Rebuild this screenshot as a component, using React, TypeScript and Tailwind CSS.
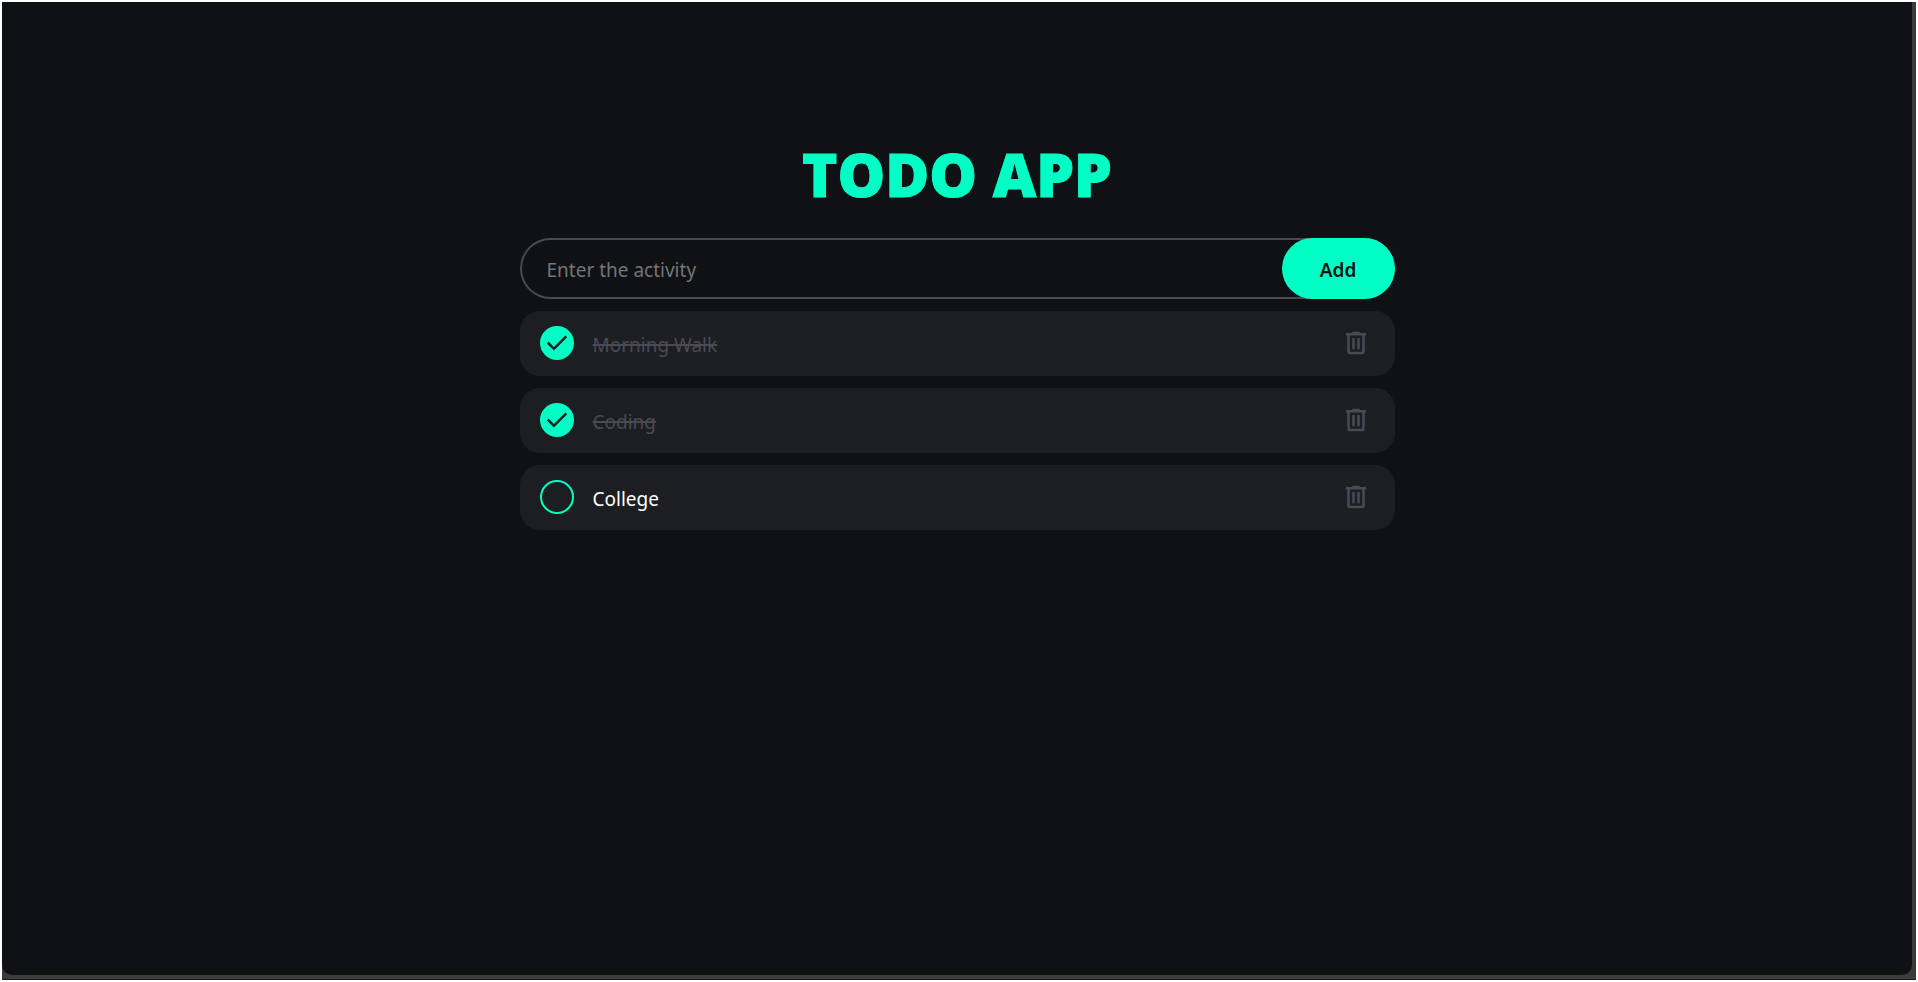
import { useState } from "react";

type Todo = { id: number; title: string; done: boolean };

const initialTodos: Todo[] = [
  { id: 1, title: "Morning Walk", done: true },
  { id: 2, title: "Coding", done: true },
  { id: 3, title: "College", done: false },
];

function CheckIcon() {
  return (
    <svg viewBox="0 -960 960 960" className="size-[30px] fill-[#1d1e21]" aria-hidden="true">
      <path d="M382-240 154-468l57-57 171 171 367-367 57 57-424 424Z" />
    </svg>
  );
}

function TrashIcon() {
  return (
    <svg viewBox="0 -960 960 960" className="size-[30px] fill-[#4a4a56]" aria-hidden="true">
      <path d="M280-120q-33 0-56.5-23.5T200-200v-520h-40v-80h200v-40h240v40h200v80h-40v520q0 33-23.5 56.5T680-120H280Zm400-600H280v520h400v-520ZM360-280h80v-360h-80v360Zm160 0h80v-360h-80v360Z" />
    </svg>
  );
}

export default function App() {
  const [todos, setTodos] = useState(initialTodos);
  const [text, setText] = useState("");

  const add = () => {
    const title = text.trim();
    if (!title) return;
    setTodos([...todos, { id: Date.now(), title, done: false }]);
    setText("");
  };

  return (
    <div className="flex min-h-screen flex-col bg-white p-[2px] font-['Noto_Sans',sans-serif]">
      <div className="flex grow flex-col border-b border-[#1d1d1d] bg-[#3c3c3c] pr-1 pb-1">
        <main className="grow rounded-b-[10px] bg-[#101115] px-4 pt-[136px]">
          <div className="mx-auto flex w-full max-w-[875px] flex-col">
            <h1 className="text-center font-['Open_Sans',sans-serif] text-[60px] leading-[72px] font-extrabold text-[#00ffc4] [-webkit-text-stroke:1px_#00ffc4]">
              TODO APP
            </h1>
            <form
              className="mt-7 flex h-[61px] rounded-full shadow-[inset_0_0_0_2px_#4a4a56]"
              onSubmit={(e) => {
                e.preventDefault();
                add();
              }}
            >
              <input
                type="text"
                aria-label="Activity"
                placeholder="Enter the activity"
                value={text}
                onChange={(e) => setText(e.target.value)}
                className="min-w-0 grow rounded-full bg-transparent pt-1 pl-[27px] text-[19px] text-white outline-none placeholder:text-[#757575]"
              />
              <button type="submit" className="w-[113px] rounded-full bg-[#00ffc4] pt-1 text-[19px] font-semibold text-[#101115]">
                Add
              </button>
            </form>
            <ul className="mt-3 flex flex-col gap-3">
              {todos.map((todo) => (
                <li key={todo.id} className="flex h-[65px] items-center rounded-[20px] bg-[#1d1e21] pr-6 pb-[2px] pl-5">
                  <label className="flex grow cursor-pointer items-center gap-[19px]">
                    <input
                      type="checkbox"
                      className="peer sr-only"
                      checked={todo.done}
                      onChange={() => setTodos(todos.map((t) => (t.id === todo.id ? { ...t, done: !t.done } : t)))}
                    />
                    <span
                      className={
                        todo.done
                          ? "flex size-[34px] items-center justify-center rounded-full bg-[#00ffc4]"
                          : "size-[34px] rounded-full border-2 border-[#00ffc4]"
                      }
                    >
                      {todo.done && <CheckIcon />}
                    </span>
                    <span
                      className={
                        todo.done
                          ? "pt-[6px] text-[19px] text-[#4a4a56] line-through decoration-2"
                          : "pt-[6px] text-[19px] text-white"
                      }
                    >
                      {todo.title}
                    </span>
                  </label>
                  <button
                    type="button"
                    aria-label={`Delete ${todo.title}`}
                    onClick={() => setTodos(todos.filter((t) => t.id !== todo.id))}
                  >
                    <TrashIcon />
                  </button>
                </li>
              ))}
            </ul>
          </div>
        </main>
      </div>
    </div>
  );
}
